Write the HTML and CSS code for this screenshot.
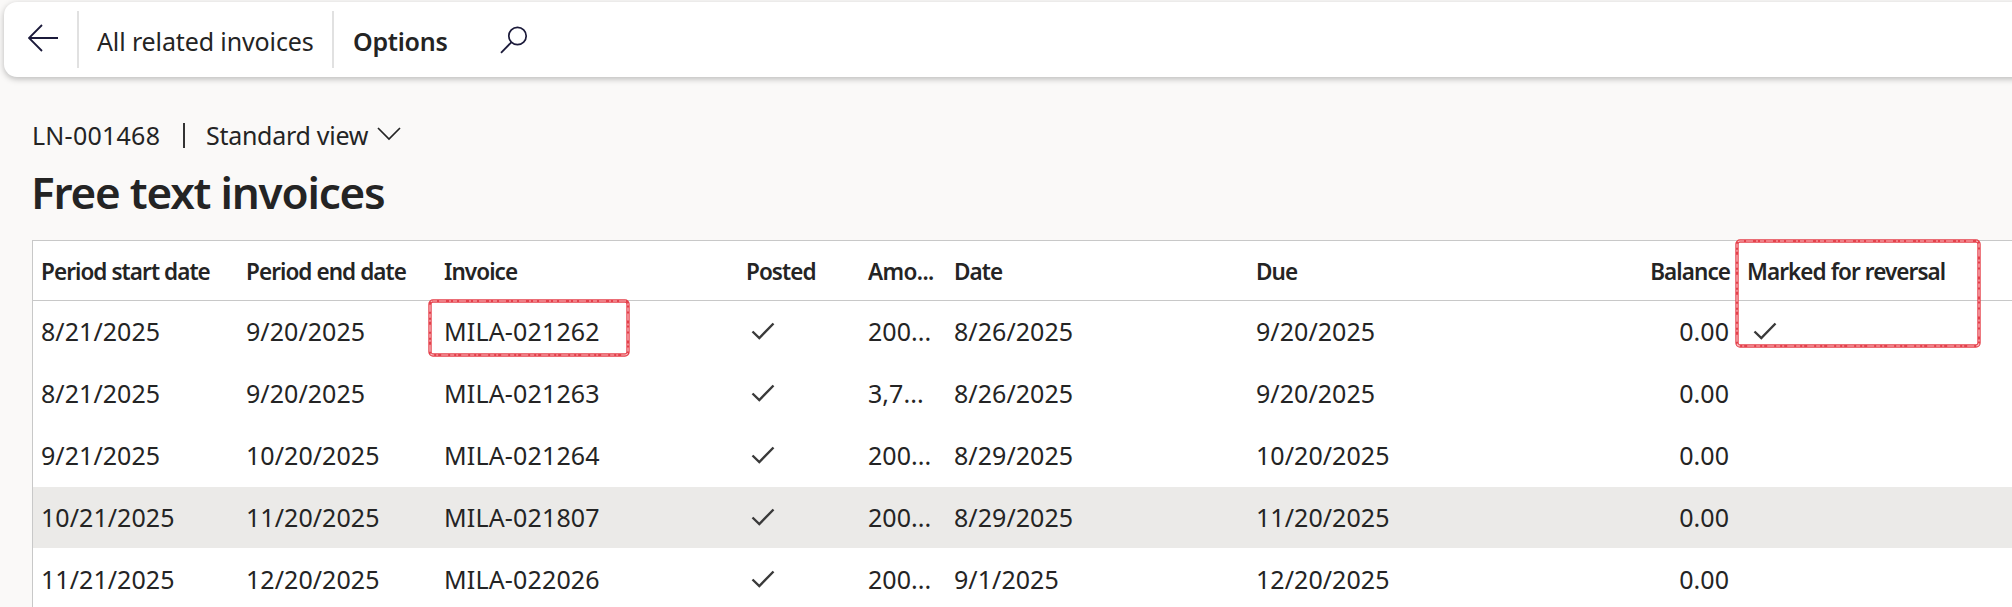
FILE: index.html
```html
<!DOCTYPE html>
<html lang="en">
<head>
  <meta charset="UTF-8">
  <meta name="viewport" content="width=device-width, initial-scale=1.0">
  <title>Free text invoices</title>
  <link rel="stylesheet" href="styles.css">
</head>
<body>
  <svg class="symbols" width="0" height="0">
    <symbol id="check" viewBox="0 0 24 18">
      <path d="M1.5 9.5 L8.3 16 L22.5 1.5" fill="none" stroke="#3a3a3a" stroke-width="2.4"/>
    </symbol>
  </svg>

  <div class="toolbar">
    <svg class="back" width="30" height="28" viewBox="0 0 30 28">
      <path d="M14 1 L1 14 L14 27 M1 14 H30" fill="none" stroke="#1b1a3a" stroke-width="1.8"/>
    </svg>
    <div class="toolbar-item related">All related invoices</div>
    <div class="toolbar-item options">Options</div>
    <svg class="search" width="28" height="28" viewBox="0 0 28 28">
      <circle cx="17.5" cy="10" r="8.7" fill="none" stroke="#1b1a3a" stroke-width="1.7"/>
      <path d="M11.3 16.3 L1 26.8" fill="none" stroke="#1b1a3a" stroke-width="1.8"/>
    </svg>
  </div>

  <div class="page-header">
    <div class="view-line">
      <span class="record">LN-001468</span>
      <span class="bar"></span>
      <span class="view">Standard view</span>
      <svg class="chevron" width="24" height="14" viewBox="0 0 24 14">
        <path d="M1 1 L12 12 L23 1" fill="none" stroke="#242424" stroke-width="1.7"/>
      </svg>
    </div>
    <h1>Free text invoices</h1>
  </div>

  <div class="grid">
    <div class="row head">
      <div>Period start date</div>
      <div>Period end date</div>
      <div>Invoice</div>
      <div>Posted</div>
      <div class="amount">Amo...</div>
      <div>Date</div>
      <div>Due</div>
      <div class="balance">Balance</div>
      <div>Marked for reversal</div>
    </div>
    <div class="row">
      <div>8/21/2025</div>
      <div>9/20/2025</div>
      <div class="invoice">MILA-021262</div>
      <div><svg class="check"><use href="#check"/></svg></div>
      <div>200...</div>
      <div>8/26/2025</div>
      <div>9/20/2025</div>
      <div class="balance">0.00</div>
      <div class="marked"><svg class="check"><use href="#check"/></svg></div>
    </div>
    <div class="row">
      <div>8/21/2025</div>
      <div>9/20/2025</div>
      <div class="invoice">MILA-021263</div>
      <div><svg class="check"><use href="#check"/></svg></div>
      <div>3,7...</div>
      <div>8/26/2025</div>
      <div>9/20/2025</div>
      <div class="balance">0.00</div>
      <div></div>
    </div>
    <div class="row">
      <div>9/21/2025</div>
      <div>10/20/2025</div>
      <div class="invoice">MILA-021264</div>
      <div><svg class="check"><use href="#check"/></svg></div>
      <div>200...</div>
      <div>8/29/2025</div>
      <div>10/20/2025</div>
      <div class="balance">0.00</div>
      <div></div>
    </div>
    <div class="row active">
      <div>10/21/2025</div>
      <div>11/20/2025</div>
      <div class="invoice">MILA-021807</div>
      <div><svg class="check"><use href="#check"/></svg></div>
      <div>200...</div>
      <div>8/29/2025</div>
      <div>11/20/2025</div>
      <div class="balance">0.00</div>
      <div></div>
    </div>
    <div class="row">
      <div>11/21/2025</div>
      <div>12/20/2025</div>
      <div class="invoice">MILA-022026</div>
      <div><svg class="check"><use href="#check"/></svg></div>
      <div>200...</div>
      <div>9/1/2025</div>
      <div>12/20/2025</div>
      <div class="balance">0.00</div>
      <div></div>
    </div>
  </div>

  <!-- red marker boxes over the grid -->
  <svg class="marker marker-invoice" width="202" height="58">
    <rect class="ink" x="2" y="2" width="198" height="54" rx="3"/>
    <rect class="grain" x="2" y="2" width="198" height="54" rx="3"/>
  </svg>
  <svg class="marker marker-reversal" width="246" height="109">
    <rect class="ink" x="2" y="2" width="242" height="105" rx="3"/>
    <rect class="grain" x="2" y="2" width="242" height="105" rx="3"/>
  </svg>
</body>
</html>
```

FILE: styles.css
```css
body {
  margin: 0;
  height: 607px;
  overflow: hidden;
  position: relative;
  background-color: #faf9f8;
  color: #242424;
  font-family: "Noto Sans", "Open Sans", sans-serif;
  font-size: 25px;
}

.symbols {
  display: block;
}

.toolbar {
  display: flex;
  align-items: center;
  height: 75px;
  margin: 2px -10px 0 4px;
  box-sizing: border-box;
  background-color: #ffffff;
  border-radius: 13px 0 0 13px;
  box-shadow: 0 2px 6px rgba(0, 0, 0, 0.26);
}

.back {
  margin-left: 24px;
  margin-right: 19px;
  margin-bottom: 3px;
}

.toolbar-item {
  height: 57px;
  line-height: 61px;
  border-left: 2px solid #e1e1e1;
  white-space: nowrap;
  box-sizing: border-box;
}

.related {
  width: 255px;
  padding-left: 18px;
  letter-spacing: -0.12px;
}

.options {
  width: 168px;
  padding-left: 19px;
  font-weight: 600;
  letter-spacing: -0.25px;
}

.page-header {
  padding-left: 32px;
}

.view-line {
  display: flex;
  align-items: center;
  height: 34px;
  margin-top: 41px;
  white-space: nowrap;
}

.record {
  width: 151px;
  letter-spacing: 0.25px;
}

.bar {
  width: 2px;
  height: 25px;
  margin-right: 21px;
  background-color: #333333;
}

.view {
  width: 171px;
  letter-spacing: -0.28px;
}

.chevron {
  margin-bottom: 3px;
}

h1 {
  margin: 7px 0 0 -1px;
  height: 81px;
  line-height: 66px;
  font-size: 44px;
  font-weight: 600;
  letter-spacing: -1.2px;
  white-space: nowrap;
}

.grid {
  margin-left: 32px;
  background-color: #ffffff;
  border-left: 1px solid #c8c8c8;
  border-top: 1px solid #c8c8c8;
}

.row {
  display: grid;
  grid-template-columns: 205px 198px 302px 122px 86px 302px 300px 191px 273px;
  height: 61px;
  padding-left: 8px;
  border-bottom: 1px solid #ffffff;
  line-height: 60px;
  letter-spacing: 0.05px;
  white-space: nowrap;
}

.head {
  height: 59px;
  border-bottom-color: #c8c8c8;
  font-size: 22.5px;
  font-weight: 600;
  line-height: 61px;
  letter-spacing: -0.93px;
}

.head .amount {
  letter-spacing: -0.6px;
}

.active {
  background-color: #ebeae8;
}

.invoice {
  letter-spacing: 0.15px;
}

.balance {
  text-align: right;
  padding-right: 18px;
}

.head .balance {
  padding-right: 17px;
}

.check {
  width: 24px;
  height: 18px;
  margin-left: 5px;
  margin-bottom: 1px;
}

.marked .check {
  margin-left: 6px;
}

.marker {
  position: absolute;
  fill: none;
}

.marker-invoice {
  left: 428px;
  top: 299px;
}

.marker-reversal {
  left: 1735px;
  top: 239px;
}

.ink {
  stroke: #e5404b;
  stroke-width: 3.4px;
}

.grain {
  stroke: #f9bcc0;
  stroke-width: 1.2px;
  stroke-dasharray: 4 2 7 3 2 2;
}
```
